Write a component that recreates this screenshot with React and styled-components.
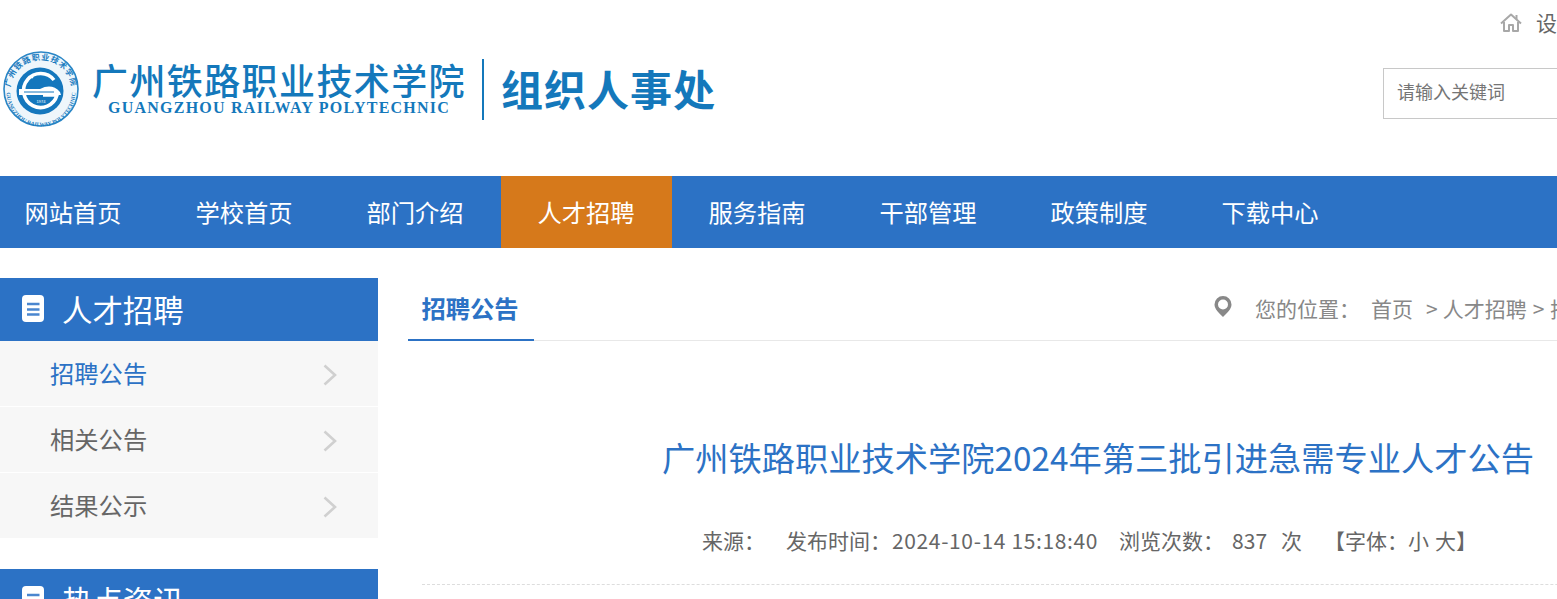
import styled, { createGlobalStyle } from "styled-components";

const CJK = `"Noto Sans CJK SC", "Noto Sans", sans-serif`;

const GlobalStyle = createGlobalStyle`
  html, body {
    margin: 0;
    padding: 0;
    background: #fff;
    overflow: hidden;
  }
  body {
    font-family: ${CJK};
  }
`;

const Page = styled.div`
  width: 1557px;
  height: 599px;
  overflow: hidden;
`;

const Header = styled.header`
  height: 176px;
  display: flex;
`;

const Brand = styled.div`
  flex: 1;
  display: flex;
  align-items: flex-start;
  padding: 50px 0 0 2px;
`;

const Wordmark = styled.div`
  margin: 11px 0 0 12px;
  width: 375px;
  color: #1478bb;
`;

const SchoolName = styled.div`
  font-size: 36px;
  line-height: 36px;
  font-weight: 500;
  letter-spacing: 1.4px;
  white-space: nowrap;
`;

const SchoolEn = styled.div`
  margin: 2px 0 0 16px;
  font-family: "Liberation Serif", serif;
  font-size: 16px;
  line-height: 18px;
  font-weight: 700;
  letter-spacing: 1.24px;
  white-space: nowrap;
`;

const Divider = styled.div`
  width: 2px;
  height: 61px;
  margin: 9px 17px 0 15px;
  background: #1478bb;
`;

const DeptName = styled.div`
  margin-top: 13px;
  font-size: 42px;
  line-height: 50px;
  font-weight: 700;
  letter-spacing: 1px;
  color: #1478bb;
  white-space: nowrap;
`;

const HeaderSide = styled.div`
  flex: 0 0 174px;
  overflow: hidden;
`;

const TopLink = styled.div`
  height: 68px;
  box-sizing: border-box;
  padding: 8px 0 0 117px;
  display: flex;
  align-items: flex-start;
  gap: 14px;
  font-size: 21px;
  line-height: 28px;
  color: #666;
  white-space: nowrap;
  svg {
    flex: none;
    margin-top: 5px;
  }
`;

const SearchBox = styled.input`
  width: 300px;
  height: 51px;
  box-sizing: border-box;
  border: 1px solid #c8c8c8;
  padding: 0 13px 5px;
  font-family: ${CJK};
  font-size: 18px;
  color: #666;
  outline: none;
  &::placeholder {
    color: #757575;
    opacity: 1;
  }
`;

const Nav = styled.nav`
  height: 72px;
  background: #2c72c5;
  display: flex;
`;

const NavList = styled.div`
  display: flex;
  margin-left: -12px;
`;

const NavItem = styled.a`
  width: 171px;
  box-sizing: border-box;
  padding-right: 1px;
  text-align: center;
  font-size: 24.3px;
  line-height: 72px;
  color: #fff;
  background: ${(props) => (props.$active ? "#d6791b" : "transparent")};
`;

const Body = styled.div`
  display: flex;
  padding-top: 30px;
`;

const Sidebar = styled.aside`
  flex: 0 0 378px;
  margin-right: 30px;
`;

const SideBlock = styled.section`
  margin-bottom: 31px;
`;

const SideTitle = styled.div`
  height: 63px;
  box-sizing: border-box;
  padding: 0 0 2px 22px;
  background: #2c72c5;
  display: flex;
  align-items: center;
  gap: 18px;
  font-size: 30.4px;
  color: #fff;
`;

const SideItem = styled.a`
  height: 65px;
  box-sizing: border-box;
  padding: 0 41px 2px 50px;
  display: flex;
  align-items: center;
  justify-content: space-between;
  background: #f7f7f7;
  font-size: 24.3px;
  color: ${(props) => (props.$active ? "#2c72c5" : "#666")};
  & + & {
    margin-top: 1px;
  }
  svg {
    margin-top: 4px;
  }
`;

const Main = styled.main`
  flex: 0 0 1380px;
`;

const TabBar = styled.div`
  height: 63px;
  box-sizing: border-box;
  border-bottom: 1px solid #e8e8e8;
  display: flex;
`;

const Tab = styled.div`
  width: 126px;
  height: 63px;
  box-sizing: border-box;
  padding-right: 2px;
  border-bottom: 2px solid #2c72c5;
  text-align: center;
  font-size: 24.3px;
  line-height: 60px;
  font-weight: 700;
  color: #2c72c5;
`;

const Crumbs = styled.div`
  margin-left: 680px;
  padding-bottom: 2px;
  box-sizing: border-box;
  display: flex;
  align-items: center;
  height: 62px;
  font-size: 21px;
  color: #888;
  white-space: nowrap;
  svg {
    margin: -4px 23px 0 0;
  }
`;

const CrumbLink = styled.span`
  margin-left: ${(props) => props.$gap}px;
`;

const Title = styled.h1`
  margin: 92px 0 0;
  text-align: center;
  font-size: 33.25px;
  line-height: 48px;
  font-weight: 400;
  color: #2c72c5;
  white-space: nowrap;
`;

const Meta = styled.div`
  margin: 44px 0 0 14px;
  padding: 0 0 29px 280px;
  border-bottom: 1px dashed #ddd;
  display: flex;
  font-size: 21px;
  line-height: 30px;
  color: #666;
  white-space: nowrap;
`;

const MetaItem = styled.span`
  margin-left: ${(props) => props.$gap}px;
`;

const MetaDate = styled.span`
  margin-left: 1px;
  letter-spacing: 0.63px;
`;

const Seal = () => (
  <svg width="78" height="78" viewBox="0 0 78 78">
    <defs>
      <path id="sealTop" d="M9 46 A30.5 30.5 0 1 1 69 46" />
      <path id="sealBottom" d="M4.5 42 A34.5 34.5 0 0 0 73.5 42" />
    </defs>
    <circle cx="39" cy="39" r="37" fill="#eef6fb" stroke="#2a86c6" strokeWidth="1.6" />
    <text fontSize="8" fontWeight="700" fill="#1b7cc0" fontFamily={CJK} letterSpacing="0.9">
      <textPath href="#sealTop" startOffset="50%" textAnchor="middle">
        广州铁路职业技术学院
      </textPath>
    </text>
    <text fontSize="5.6" fontWeight="700" fill="#1b7cc0" fontFamily="Liberation Serif, serif">
      <textPath href="#sealBottom" startOffset="50%" textAnchor="middle">
        GUANGZHOU RAILWAY POLYTECHNIC
      </textPath>
    </text>
    <circle cx="38" cy="41" r="23.5" fill="#1477bd" />
    <path d="M52 30 A17 17 0 1 0 55 45 H41" fill="none" stroke="#fff" strokeWidth="3.6" />
    <path d="M17 39 H38 Q50 33 58 42 L59 45 H17 Z" fill="#fff" />
    <path d="M22 42 H52" stroke="#1477bd" strokeWidth="1" />
    <circle cx="25" cy="31" r="1.4" fill="#fff" />
    <circle cx="30" cy="27" r="1.4" fill="#fff" />
    <text x="39" y="53" fontSize="4" fill="#fff" textAnchor="middle" fontFamily="Liberation Sans, sans-serif">
      1974
    </text>
  </svg>
);

const HomeIcon = () => (
  <svg width="22" height="19" viewBox="0 0 22 19" fill="none" stroke="#a8a8a8" strokeWidth="2">
    <path d="M1 10.5 11 1.5l10 9" strokeLinejoin="round" />
    <path d="M4 9v9h5v-6h4v6h5V9" strokeLinejoin="round" />
    <path d="M16.5 2v4" />
  </svg>
);

const MenuIcon = () => (
  <svg width="22" height="27" viewBox="0 0 22 27">
    <rect width="22" height="27" rx="4" fill="#fff" />
    <path d="M5 9h12.5M5 14.5h12.5M5 19.5h12.5" stroke="#4a86cf" strokeWidth="2.6" />
  </svg>
);

const Chevron = () => (
  <svg width="14" height="22" viewBox="0 0 14 22" fill="none" stroke="#d0d0d0" strokeWidth="2.6">
    <path d="M1.5 1.5 12 11 1.5 20.5" />
  </svg>
);

const Pin = () => (
  <svg width="18" height="21" viewBox="0 0 18 21">
    <path
      fillRule="evenodd"
      d="M9 0a8.5 8.5 0 0 1 8.5 8.5C17.5 13 13 17 9 21 5 17 .5 13 .5 8.5A8.5 8.5 0 0 1 9 0Zm0 3.5a5 5 0 1 0 0 10 5 5 0 0 0 0-10Z"
      fill="#888"
    />
  </svg>
);

const navItems = ["网站首页", "学校首页", "部门介绍", "人才招聘", "服务指南", "干部管理", "政策制度", "下载中心"];
const sideItems = ["招聘公告", "相关公告", "结果公示"];

export default function App() {
  return (
    <Page>
      <GlobalStyle />
      <Header>
        <Brand>
          <Seal />
          <Wordmark>
            <SchoolName>广州铁路职业技术学院</SchoolName>
            <SchoolEn>GUANGZHOU RAILWAY POLYTECHNIC</SchoolEn>
          </Wordmark>
          <Divider />
          <DeptName>组织人事处</DeptName>
        </Brand>
        <HeaderSide>
          <TopLink>
            <HomeIcon />
            <span>设为首页</span>
          </TopLink>
          <SearchBox placeholder="请输入关键词" />
        </HeaderSide>
      </Header>
      <Nav>
        <NavList>
          {navItems.map((item) => (
            <NavItem key={item} $active={item === "人才招聘"}>
              {item}
            </NavItem>
          ))}
        </NavList>
      </Nav>
      <Body>
        <Sidebar>
          <SideBlock>
            <SideTitle>
              <MenuIcon />
              人才招聘
            </SideTitle>
            {sideItems.map((item, i) => (
              <SideItem key={item} $active={i === 0}>
                {item}
                <Chevron />
              </SideItem>
            ))}
          </SideBlock>
          <SideBlock>
            <SideTitle>
              <MenuIcon />
              热点资讯
            </SideTitle>
          </SideBlock>
        </Sidebar>
        <Main>
          <TabBar>
            <Tab>招聘公告</Tab>
            <Crumbs>
              <Pin />
              <span>您的位置：</span>
              <CrumbLink $gap={11}>首页</CrumbLink>
              <CrumbLink $gap={13}>&gt;</CrumbLink>
              <CrumbLink $gap={5}>人才招聘</CrumbLink>
              <CrumbLink $gap={6}>&gt;</CrumbLink>
              <CrumbLink $gap={6}>招聘公告</CrumbLink>
            </Crumbs>
          </TabBar>
          <Title>广州铁路职业技术学院2024年第三批引进急需专业人才公告</Title>
          <Meta>
            <span>来源：</span>
            <MetaItem $gap={21}>发布时间：</MetaItem>
            <MetaDate>2024-10-14 15:18:40</MetaDate>
            <MetaItem $gap={21}>浏览次数：</MetaItem>
            <MetaItem $gap={8}>837</MetaItem>
            <MetaItem $gap={14}>次</MetaItem>
            <MetaItem $gap={22}>【字体：</MetaItem>
            <MetaItem $gap={0}>小</MetaItem>
            <MetaItem $gap={6}>大】</MetaItem>
          </Meta>
        </Main>
      </Body>
    </Page>
  );
}
